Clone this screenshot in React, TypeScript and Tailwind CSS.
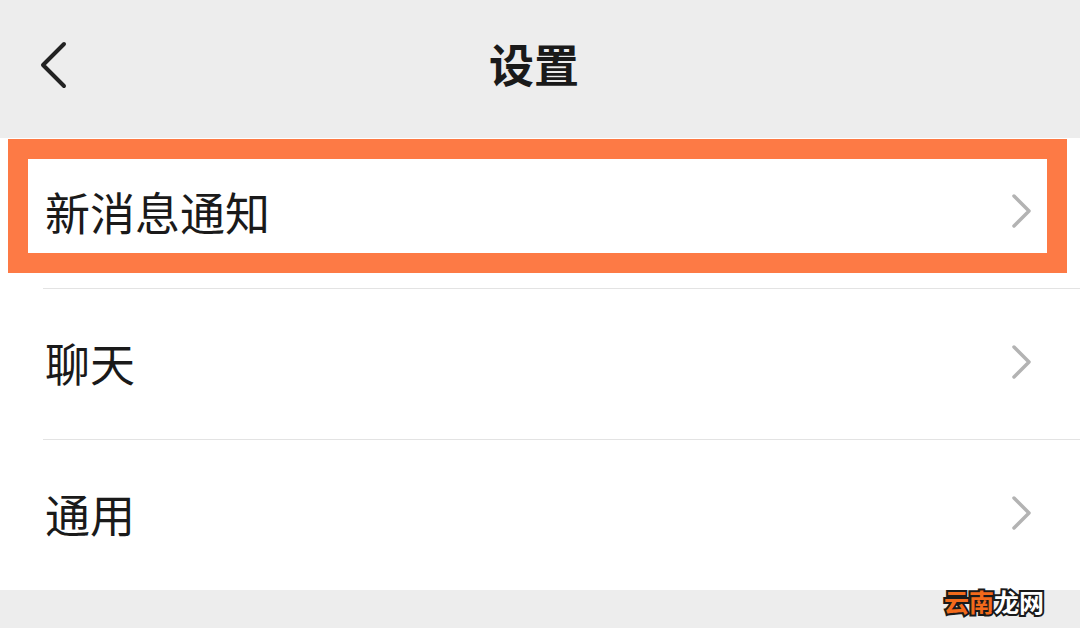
import React from "react";

const font = { fontFamily: '"Noto Sans CJK SC", "Noto Sans", sans-serif' };

function Chevron({ className }: { className?: string }) {
  return (
    <svg width="22" height="36" viewBox="0 0 22 36" className={className} fill="none">
      <path d="M3 3 L18 18 L3 33" stroke="currentColor" strokeWidth="3.5" strokeLinecap="round" strokeLinejoin="round" />
    </svg>
  );
}

function Row({ label, last, children }: { label: string; last?: boolean; children?: React.ReactNode }) {
  return (
    <div className="relative bg-white">
      <div className="flex h-[150px] items-center justify-between pb-[4px] pl-[45px] pr-[47px]">
        <span className="text-[45px] leading-none text-[#1a1a1a]">{label}</span>
        <Chevron className="text-[#b3b3b3]" />
      </div>
      {!last && <div className="ml-[43px] h-px bg-[#e3e3e3]" />}
      {children}
    </div>
  );
}

export default function App() {
  return (
    <div className="relative flex h-[628px] w-[1080px] flex-col overflow-hidden bg-[#ededed]" style={font}>
      <header className="relative flex h-[138px] items-center justify-center pb-[12px] pr-[12px]">
        <svg width="30" height="48" viewBox="0 0 30 48" className="absolute left-[38px] top-[41px] text-[#222]" fill="none">
          <path d="M26 3 L5 24 L26 45" stroke="currentColor" strokeWidth="4" strokeLinecap="round" strokeLinejoin="round" />
        </svg>
        <h1 className="text-[45px] font-bold leading-none text-[#1a1a1a]">设置</h1>
      </header>

      <div className="flex flex-col">
        <Row label="新消息通知">
          <div className="pointer-events-none absolute left-[8px] top-[1px] h-[134px] w-[1059px] border-[20px] border-[#fd7a45]" />
        </Row>
        <Row label="聊天" />
        <Row label="通用" last />
      </div>

      <div className="absolute bottom-[14px] right-[36px] flex text-[25px] font-bold leading-none [-webkit-text-stroke:4px_#1a1a1a] [paint-order:stroke_fill]">
        <span className="text-[#f26a1b]">云南</span>
        <span className="text-white">龙网</span>
      </div>
    </div>
  );
}
